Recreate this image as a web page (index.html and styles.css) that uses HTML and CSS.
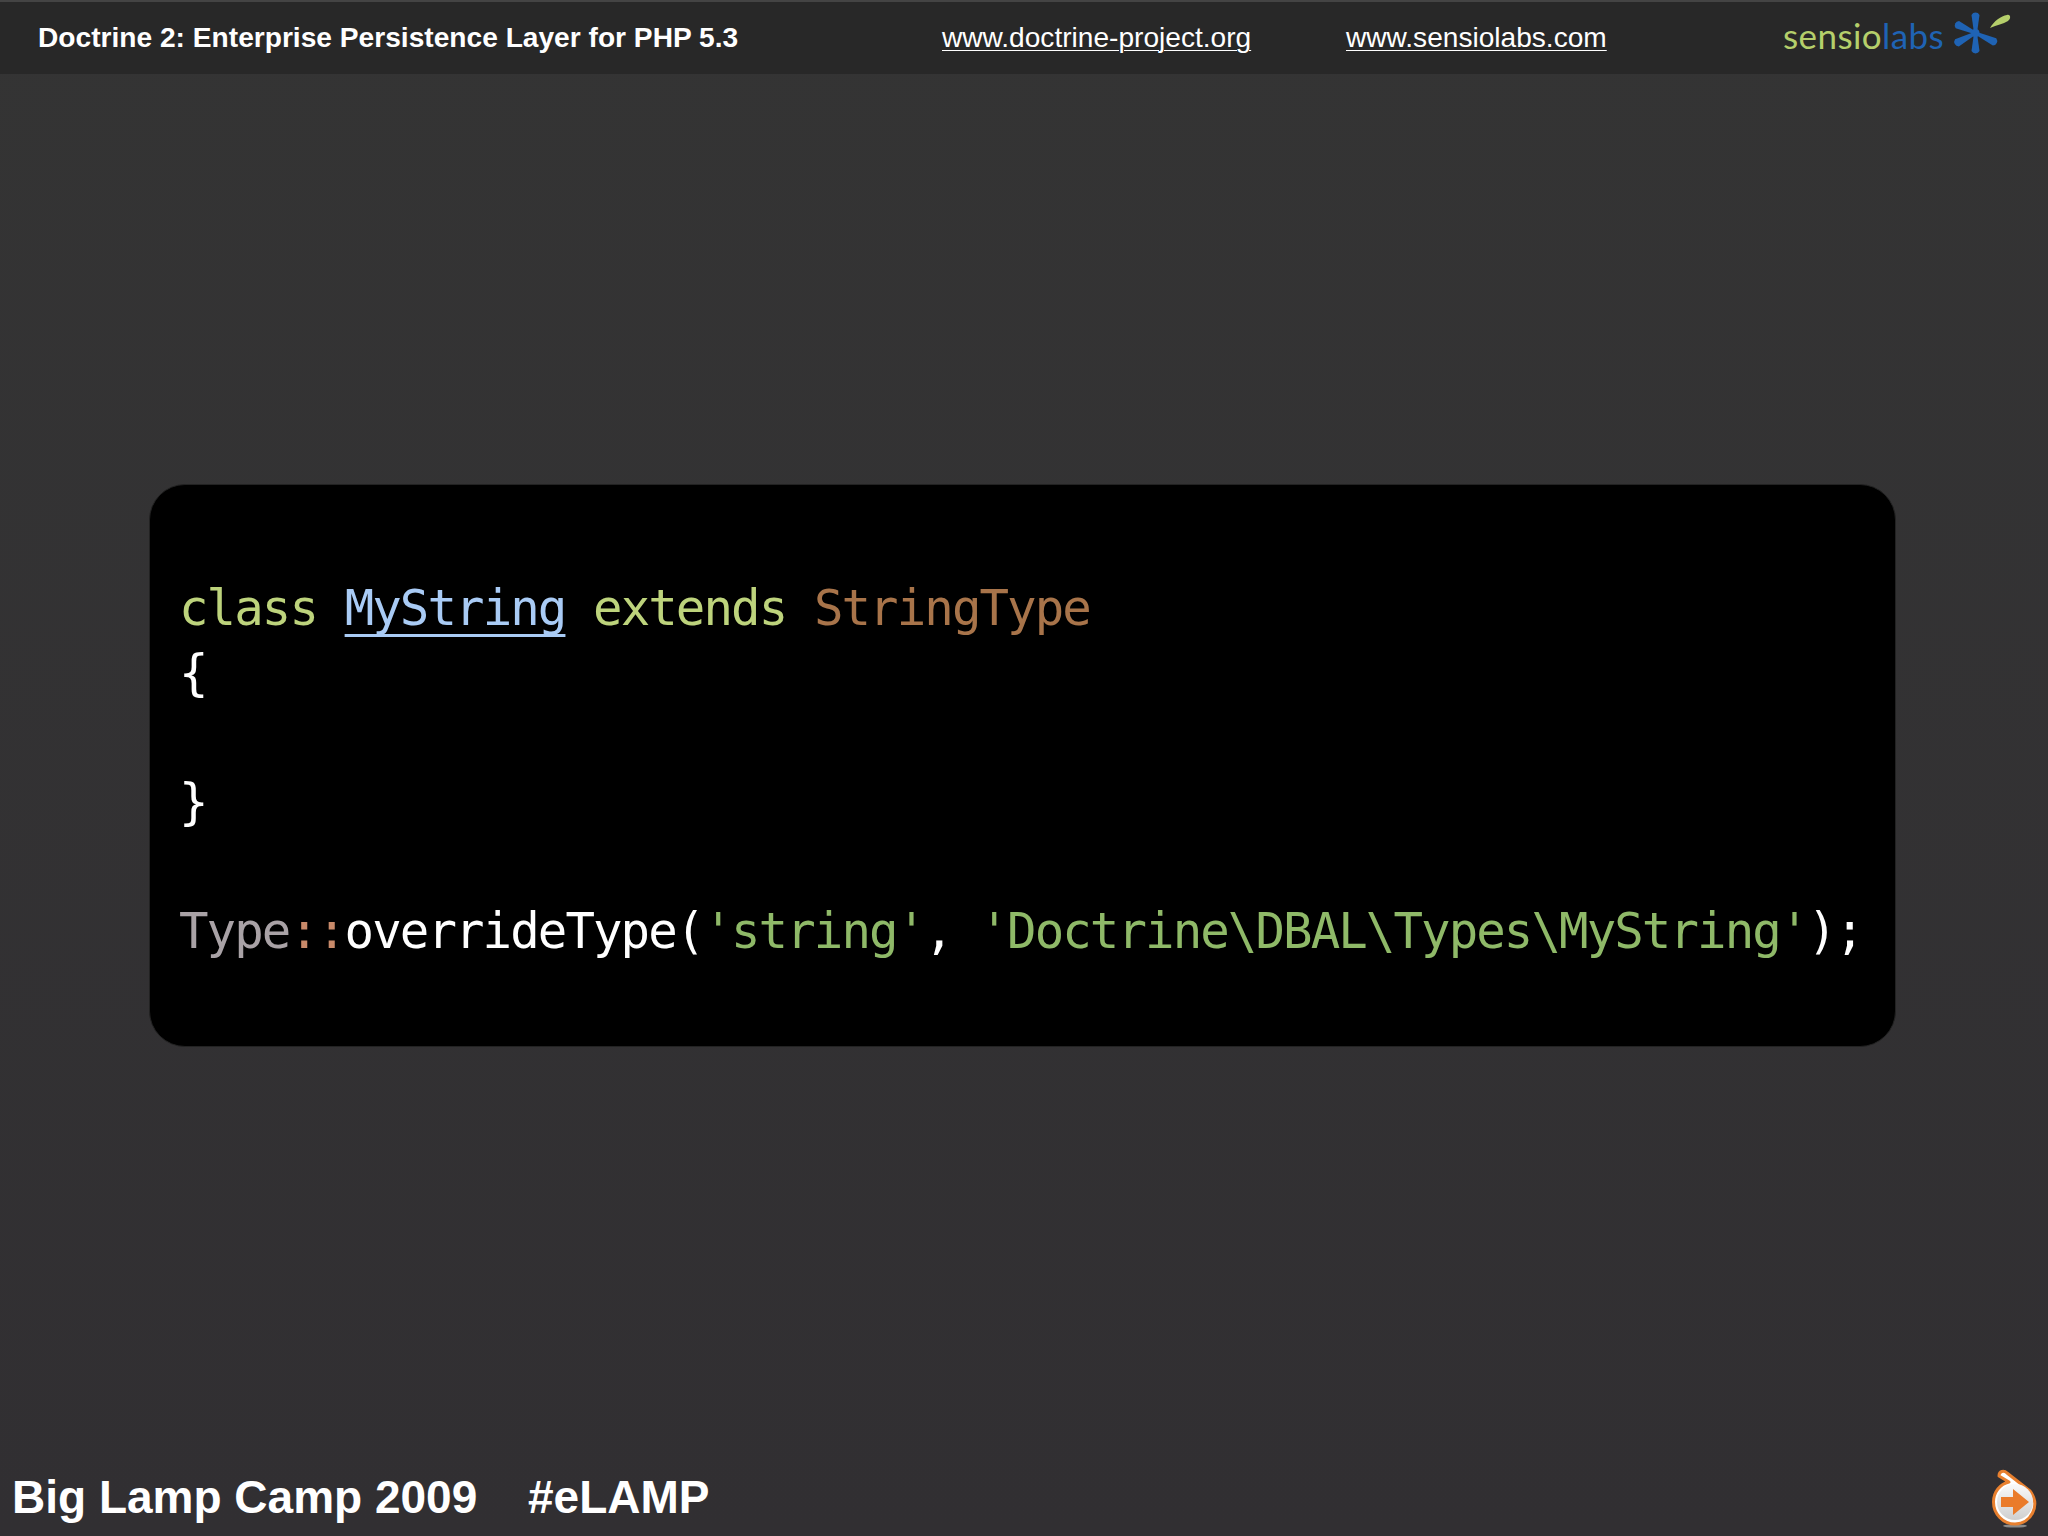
FILE: index.html
```html
<!DOCTYPE html>
<html lang="en">
<head>
    <meta charset="UTF-8">
    <title>Doctrine 2: Enterprise Persistence Layer for PHP 5.3</title>
    <link rel="stylesheet" href="styles.css">
</head>
<body>
    <!-- Top bar -->
    <header class="top-bar">
        <h1 class="deck-title">Doctrine 2: Enterprise Persistence Layer for PHP 5.3</h1>
        <a class="top-link link-doctrine" href="#">www.doctrine-project.org</a>
        <a class="top-link link-sensio" href="#">www.sensiolabs.com</a>
        <div class="logo">
            <span class="logo-text"><span class="logo-green">sensio</span><span class="logo-blue">labs</span></span>
            <svg class="logo-mark" width="66" height="50" viewBox="0 0 66 50">
                <g fill="#1f63b4" transform="translate(24.5 25)">
                    <path d="M-1.5 0 L-4 -18 A4.5 4.5 0 0 1 4 -18 L1.5 0 Z"/>
                    <path d="M-1.5 0 L-4 -18 A4.5 4.5 0 0 1 4 -18 L1.5 0 Z" transform="rotate(180)"/>
                    <path d="M-1.5 0 L-4 -20 A4.5 4.5 0 0 1 4 -20 L1.5 0 Z" transform="rotate(-65)"/>
                    <path d="M-1.5 0 L-4 -21 A4.5 4.5 0 0 1 4 -21 L1.5 0 Z" transform="rotate(-118)"/>
                    <path d="M-1.5 0 L-4 -21 A4.5 4.5 0 0 1 4 -21 L1.5 0 Z" transform="rotate(115)"/>
                    <circle r="4"/>
                </g>
                <path d="M39 20 C43 13 50 8 56 7 C60 6 60 11 57 13 C52 16 46 17 39 20 Z" fill="#b5cf6b"/>
            </svg>
        </div>
    </header>

    <!-- Slide content -->
    <main class="slide">
        <pre class="code-box"><code><span class="kw">class</span> <span class="cls">MyString</span> <span class="kw">extends</span> <span class="parent">StringType</span>
{

}

<span class="type">Type</span><span class="sep">::</span>overrideType(<span class="str">'string'</span>, <span class="str">'Doctrine\DBAL\Types\MyString'</span>);</code></pre>
    </main>

    <!-- Bottom bar -->
    <footer class="bottom-bar">
        <span class="event">Big Lamp Camp 2009</span>
        <span class="hashtag">#eLAMP</span>
        <svg class="next-icon" width="48" height="64" viewBox="0 0 48 64">
            <defs>
                <linearGradient id="ball" x1="0" y1="0" x2="0" y2="1">
                    <stop offset="0" stop-color="#fafafa"/>
                    <stop offset="1" stop-color="#cfcfcf"/>
                </linearGradient>
            </defs>
            <ellipse cx="23" cy="59" rx="12" ry="1.6" fill="#8a8a8a"/>
            <path d="M7 9 C7 4 12 3 15 6 L38 24 C49 38 39 57 23 57 C11 57 1.5 47 1.5 35 C1.5 25 8 17 17 15 Z" fill="#fff" stroke="#e8802f" stroke-width="3" stroke-linejoin="round"/>
            <circle cx="23" cy="35" r="18" fill="url(#ball)"/>
            <path d="M9 30 H21 V22 L37 35 L21 48 V40 H9 Z" fill="#ea7b2a"/>
        </svg>
    </footer>
</body>
</html>
```

FILE: styles.css
```css
body {
    margin: 0;
    height: 100vh;
    display: flex;
    flex-direction: column;
    overflow: hidden;
    background: linear-gradient(#343434, #312f32);
    color: #fff;
    font-family: "Liberation Sans", Arial, sans-serif;
}

/* Top bar */
.top-bar {
    height: 72px;
    display: flex;
    align-items: center;
    flex-shrink: 0;
    padding-left: 38px;
    background-color: #282828;
    border-top: 2px solid #444;
}

.deck-title {
    width: 904px;
    margin: 0;
    font-size: 28.15px;
    font-weight: bold;
}

.top-link {
    color: #fff;
    font-size: 28.1px;
    text-decoration-thickness: 1px;
    text-underline-offset: 3px;
}

.link-doctrine {
    width: 404px;
}

.logo {
    display: flex;
    align-items: center;
    margin-left: auto;
    margin-right: 31px;
}

.logo-text {
    margin-bottom: 6px;
    font-family: Lato, sans-serif;
    font-size: 35px;
    letter-spacing: 0.4px;
}

.logo-green {
    color: #b5cf6b;
}

.logo-blue {
    color: #1f63b4;
}

.logo-mark {
    margin-left: 7px;
    margin-bottom: 11px;
}

/* Code slide */
.slide {
    flex-grow: 1;
    padding: 410px 152px 0 149px;
}

.code-box {
    height: 563px;
    box-sizing: border-box;
    margin: 0;
    padding: 92px 0 0 29px;
    background-color: #000;
    border: 1px solid #222;
    border-radius: 36px;
    font-family: "DejaVu Sans Mono", monospace;
    font-size: 49px;
    letter-spacing: -1.9px;
    line-height: 64.5px;
}

.kw {
    color: #bdd37c;
}

.cls {
    color: #a9cbf5;
    text-decoration: underline;
    text-decoration-thickness: 3px;
    text-decoration-skip-ink: none;
    text-underline-offset: 9px;
}

.parent {
    color: #a8744a;
}

.type {
    color: #a9a2a6;
}

.sep {
    color: #c98a6a;
}

.str {
    color: #8fb968;
}

/* Bottom bar */
.bottom-bar {
    height: 74px;
    display: flex;
    align-items: center;
    flex-shrink: 0;
    padding-left: 12px;
    padding-bottom: 5px;
    box-sizing: border-box;
    font-size: 46px;
    font-weight: bold;
}

.event {
    width: 516px;
}

.next-icon {
    margin-left: auto;
    margin-right: 8px;
    margin-bottom: -5px;
}
```
